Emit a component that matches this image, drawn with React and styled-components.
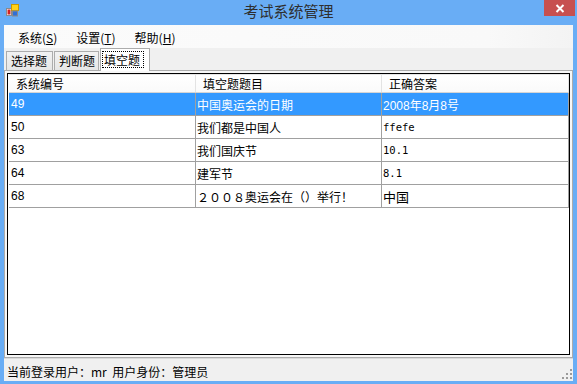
import React from 'react';
import styled, { createGlobalStyle } from 'styled-components';

const Global = createGlobalStyle`
  html, body { margin: 0; padding: 0; }
  body {
    background: #69adf5;
    font-family: "Noto Sans CJK SC", "Liberation Sans", sans-serif;
    overflow: hidden;
  }
`;

const Window = styled.div`
  width: 577px;
  height: 384px;
  background: #69adf5;
  display: flex;
  flex-direction: column;
`;

const TitleBar = styled.div`
  height: 25px;
  flex: none;
  display: grid;
  grid-template-columns: 1fr auto 1fr;
  align-items: start;
`;

const AppIcon = styled.svg`
  margin: 4px 0 0 6px;
  display: block;
`;

const Title = styled.div`
  font-size: 15px;
  line-height: 22px;
  color: #2e2e2e;
  font-family: "Noto Sans CJK SC", sans-serif;
`;

const CloseButton = styled.div`
  justify-self: end;
  margin-right: 2px;
  width: 31px;
  height: 16px;
  background: #c75050;
  display: flex;
  align-items: center;
  justify-content: center;
`;

const Client = styled.div`
  flex: 1;
  margin: 0 4px 3px 4px;
  background: #f0f0f0;
  display: flex;
  flex-direction: column;
  min-height: 0;
`;

const MenuBar = styled.div`
  height: 23px;
  box-sizing: border-box;
  padding: 2px 0 0 5px;
  background: linear-gradient(to right, #fbfbfb, #f9f9f9 85%, #f3f3f3);
  display: flex;
  align-items: center;
  flex: none;
`;

const MenuItem = styled.div`
  padding: 0 9px 0 ${p => (p.$first ? '9px' : '10px')};
  font-size: 12px;
  line-height: 20px;
  color: #000;
  u { text-decoration: underline; text-underline-offset: 1px; }
`;

const TabStrip = styled.div`
  height: 22px;
  flex: none;
  display: flex;
  align-items: flex-end;
  padding-left: 2px;
  position: relative;
  z-index: 1;
`;

const Tab = styled.div`
  box-sizing: border-box;
  height: ${p => (p.$active ? '23px' : '19px')};
  margin-bottom: ${p => (p.$active ? '-1px' : '0')};
  margin-right: ${p => (p.$active ? '0' : '1px')};
  width: ${p => p.$w}px;
  border: 1px solid #acacac;
  border-bottom: none;
  background: ${p => (p.$active ? '#ffffff' : 'linear-gradient(#f2f2f2, #e6e6e6)')};
  font-size: 12px;
  line-height: 17px;
  color: #000;
  padding: ${p => (p.$active ? '2px 0 0 1px' : '0 0 0 4px')};
  white-space: nowrap;
`;

const Focus = styled.span`
  display: inline-block;
  border: 1px dotted #000;
  padding: 0 3px 0 1px;
  line-height: 15px;
`;

const TabPage = styled.div`
  flex: 1;
  min-height: 0;
  border: 1px solid #acacac;
  background: #f7f7f7;
  padding: 2px;
  display: flex;
`;

const Grid = styled.div`
  flex: 1;
  border: 1px solid #000;
  background: #fff;
  padding-left: 1px;
  display: flex;
  flex-direction: column;
`;

const cols = '187px 186px 187px';

const HeaderRow = styled.div`
  display: grid;
  grid-template-columns: ${cols};
  height: 19px;
  box-sizing: border-box;
  border-top: 1px solid #e6e6e6;
  border-bottom: 1px solid #d5d5d5;
  background: linear-gradient(#ffffff, #fafafa);
`;

const HeaderCell = styled.div`
  border-right: 1px solid #e3e3e3;
  padding-left: 7px;
  font-size: 12px;
  line-height: 17px;
  color: #000;
  white-space: nowrap;
`;

const Row = styled.div`
  display: grid;
  grid-template-columns: ${cols};
  height: 23px;
  box-sizing: border-box;
  border-bottom: 1px solid #a0a0a0;
  background: ${p => (p.$selected ? '#3399ff' : '#ffffff')};
  color: ${p => (p.$selected ? '#ffffff' : '#000000')};
`;

const Cell = styled.div`
  border-right: 1px solid #a0a0a0;
  padding-left: ${p => (p.$first ? '2px' : '1px')};
  display: flex;
  align-items: center;
  white-space: nowrap;
  overflow: hidden;
  font-family: ${p => (p.$mono ? '"DejaVu Sans Mono", monospace' : '"Liberation Sans", "Noto Sans CJK SC", sans-serif')};
  font-size: ${p => (p.$mono ? '10.5px' : p.$big ? '13px' : '12px')};
`;

const StatusBar = styled.div`
  height: 23px;
  flex: none;
  box-sizing: border-box;
  border-top: 1px solid #dadada;
  padding: 3px 0 0 3px;
  display: flex;
  align-items: center;
  font-size: 12px;
  color: #000;
`;

const Grip = styled.svg`
  margin-left: auto;
  align-self: flex-end;
  margin-bottom: 1px;
  display: block;
`;

const rows = [
  { id: '49', q: '中国奥运会的日期', a: '2008年8月8号' },
  { id: '50', q: '我们都是中国人', a: 'ffefe', mono: true },
  { id: '63', q: '我们国庆节', a: '10.1', mono: true },
  { id: '64', q: '建军节', a: '8.1', mono: true },
  { id: '68', q: '２００８奥运会在（）举行！', a: '中国', big: true },
];

export default function App() {
  return (
    <>
      <Global />
      <Window>
        <TitleBar>
          <AppIcon width="13" height="13" viewBox="0 0 13 13">
            <rect x="0.5" y="4.5" width="5" height="7" fill="#fff" stroke="#8a8a8a" />
            <rect x="1.5" y="5.5" width="3" height="5" fill="#d42020" />
            <rect x="5.5" y="0.5" width="7" height="6" fill="#ffd21a" stroke="#c99a00" />
            <rect x="6.5" y="7" width="5" height="5" fill="#2f6fd8" stroke="#8a8a8a" />
          </AppIcon>
          <Title>考试系统管理</Title>
          <CloseButton>
            <svg width="10" height="9" viewBox="0 0 10 9">
              <path d="M1.5 1 L8.5 8 M8.5 1 L1.5 8" stroke="#fff" strokeWidth="2" />
            </svg>
          </CloseButton>
        </TitleBar>
        <Client>
          <MenuBar>
            <MenuItem $first>系统(<u>S</u>)</MenuItem>
            <MenuItem>设置(<u>T</u>)</MenuItem>
            <MenuItem>帮助(<u>H</u>)</MenuItem>
          </MenuBar>
          <TabStrip>
            <Tab $w={47}>选择题</Tab>
            <Tab $w={45}>判断题</Tab>
            <Tab $w={50} $active>
              <Focus>填空题</Focus>
            </Tab>
          </TabStrip>
          <TabPage>
            <Grid>
              <HeaderRow>
                <HeaderCell>系统编号</HeaderCell>
                <HeaderCell>填空题题目</HeaderCell>
                <HeaderCell>正确答案</HeaderCell>
              </HeaderRow>
              {rows.map((r, i) => (
                <Row key={r.id} $selected={i === 0}>
                  <Cell $first>{r.id}</Cell>
                  <Cell>{r.q}</Cell>
                  <Cell $mono={r.mono} $big={r.big}>{r.a}</Cell>
                </Row>
              ))}
            </Grid>
          </TabPage>
          <StatusBar>
            当前登录用户：mr&nbsp;&nbsp;用户身份：管理员
            <Grip width="12" height="12" viewBox="0 0 12 12">
              <g fill="#9a9a9a">
                <rect x="9" y="1" width="2" height="2" />
                <rect x="9" y="5" width="2" height="2" />
                <rect x="5" y="5" width="2" height="2" />
                <rect x="9" y="9" width="2" height="2" />
                <rect x="5" y="9" width="2" height="2" />
                <rect x="1" y="9" width="2" height="2" />
              </g>
            </Grip>
          </StatusBar>
        </Client>
      </Window>
    </>
  );
}
